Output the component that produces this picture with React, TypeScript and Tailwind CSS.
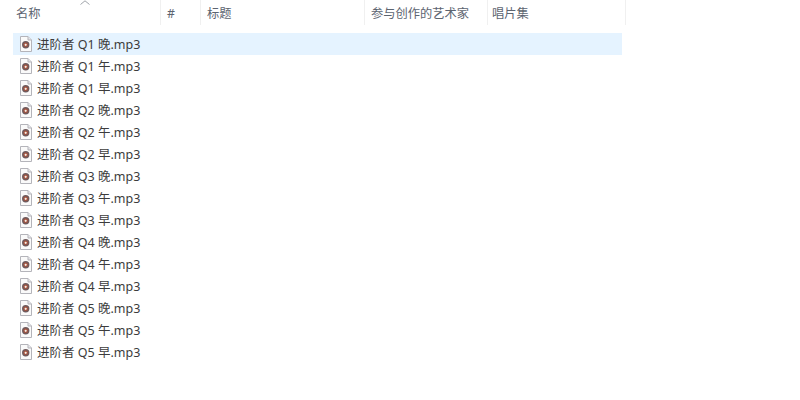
const names = ["Q1 晚", "Q1 午", "Q1 早", "Q2 晚", "Q2 午", "Q2 早", "Q3 晚", "Q3 午", "Q3 早", "Q4 晚", "Q4 午", "Q4 早", "Q5 晚", "Q5 午", "Q5 早"];

const cols = [
  { label: "名称", w: "w-[161px]", pl: "pl-[16px]" },
  { label: "#", w: "w-[40px]", pl: "pl-[6px]" },
  { label: "标题", w: "w-[164px]", pl: "pl-[6px]" },
  { label: "参与创作的艺术家", w: "w-[123px]", pl: "pl-[6px]" },
  { label: "唱片集", w: "w-[138px]", pl: "pl-[4px]" },
];

function FileIcon() {
  return (
    <svg width="12" height="16" viewBox="0 0 12 16" className="shrink-0 mt-[-1px]">
      <path d="M0.5 0.5H8L11.5 4V15.5H0.5Z" fill="#fafafa" stroke="#b4b4ba" />
      <path d="M8 0.5V4H11.5" fill="#e6e6ea" stroke="#b4b4ba" />
      <circle cx="5.7" cy="8.8" r="3.7" fill="#6f5a5c" />
      <circle cx="5.7" cy="8.8" r="2.3" fill="#a8543f" />
      <circle cx="5.7" cy="8.8" r="1.1" fill="#f3ede6" />
    </svg>
  );
}

export default function App() {
  return (
    <div className="w-[800px] h-[400px] overflow-hidden bg-white font-['Noto_Sans','Noto_Sans_CJK_SC',sans-serif]">
      <div className="relative flex h-[25px] items-center text-[#5c6470] text-[12.25px]">
        <svg width="10" height="5" viewBox="0 0 10 5" className="absolute left-[80px] top-[0px]">
          <path d="M0.5 4.5L5 0.8L9.5 4.5" fill="none" stroke="#a0a4aa" />
        </svg>
        {cols.map((c) => (
          <div key={c.label} className={`${c.w} ${c.pl} h-full flex items-center pt-[3px] border-r border-[#f0f0f0]`}>
            {c.label}
          </div>
        ))}
      </div>
      <div className="pt-[8px] pl-[13px]">
        {names.map((n, i) => (
          <div key={n} className={`flex h-[22px] w-[609px] items-center gap-[5px] pl-[7px] text-[#3c3c3c] text-[12.5px] ${i === 0 ? "bg-[#e5f3ff]" : ""}`}>
            <FileIcon />
            <span className="pt-[3px]">进阶者 {n}.mp3</span>
          </div>
        ))}
      </div>
    </div>
  );
}
